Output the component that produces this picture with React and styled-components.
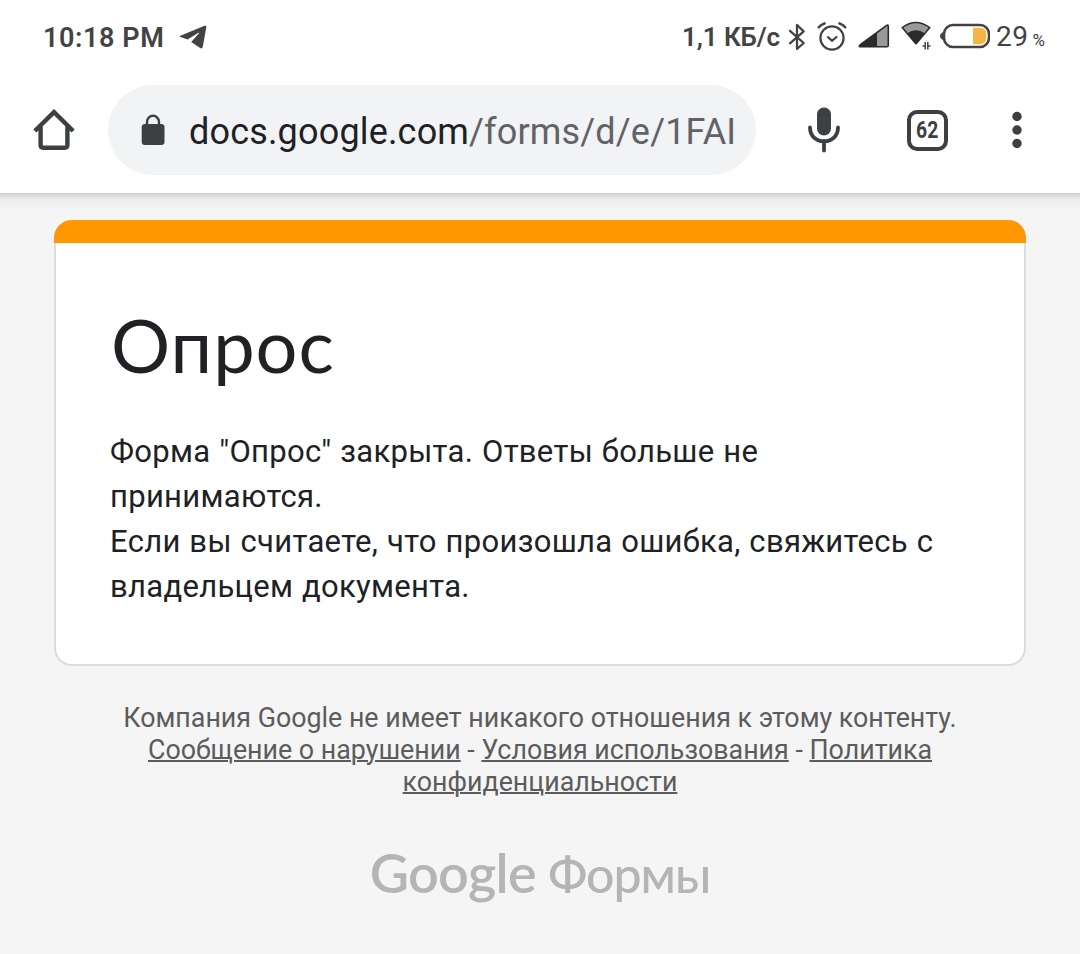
import React from "react";
import styled, { createGlobalStyle } from "styled-components";

const GlobalStyle = createGlobalStyle`
  * {
    box-sizing: border-box;
  }
  body {
    margin: 0;
    background: #f5f5f5;
    font-family: Roboto, "Noto Sans", sans-serif;
    color: #202124;
  }
`;

const Page = styled.div`
  width: 1080px;
  height: 954px;
  overflow: hidden;
  display: flex;
  flex-direction: column;
  background: #f5f5f5;
`;

const Header = styled.header`
  flex: none;
  height: 193px;
  background: #fff;
`;

const StatusBar = styled.div`
  height: 73px;
  padding: 0 25px 0 43px;
  display: flex;
  align-items: center;
  color: #434343;
  svg {
    flex: none;
    display: block;
  }
`;

const Time = styled.span`
  width: 136px;
  margin-top: 2px;
  font-size: 27px;
  font-weight: 600;
  letter-spacing: 0.6px;
  white-space: nowrap;
`;

const Indicators = styled.div`
  margin-left: auto;
  display: flex;
  align-items: center;
  gap: 11px;
`;

const Speed = styled.span`
  width: 95px;
  font-size: 26px;
  font-weight: 600;
  letter-spacing: -0.1px;
  white-space: nowrap;
`;

const Percent = styled.span`
  width: 59px;
  margin-left: -5px;
  display: flex;
  align-items: baseline;
  font-size: 28px;
  letter-spacing: 0.5px;
  small {
    margin-left: 4px;
    font-size: 17px;
  }
`;

const Toolbar = styled.div`
  height: 120px;
  padding: 12px 0 18px;
  display: flex;
  align-items: center;
  color: #3c4043;
`;

const ToolButton = styled.button`
  width: ${(props) => props.$width}px;
  height: 90px;
  padding: 0;
  border: 0;
  background: none;
  color: inherit;
  display: flex;
  align-items: center;
  justify-content: center;
`;

const AddressBar = styled.div`
  width: 648px;
  height: 90px;
  padding-left: 33px;
  border-radius: 45px;
  background: #f1f3f4;
  display: flex;
  align-items: center;
  overflow: hidden;
`;

const Url = styled.span`
  margin: 4px 0 0 24px;
  font-size: 36px;
  letter-spacing: 0.17px;
  white-space: nowrap;
  color: #202124;
  span {
    color: #5f6368;
  }
`;

const Tabs = styled.span`
  width: 41px;
  height: 41px;
  border: 4px solid #3c4043;
  border-radius: 10px;
  display: flex;
  align-items: center;
  justify-content: center;
  font-family: Roboto, sans-serif;
  font-size: 23px;
  font-weight: 700;
  span {
    transform: scaleX(0.84);
  }
`;

const Main = styled.main`
  flex: 1;
  padding: 27px 54px 0;
  background: linear-gradient(#cfcfcf, #dedede 3px, #ececec 6px, #f5f5f5 17px);
`;

const Card = styled.section`
  height: 446px;
  border: 2px solid #dadce0;
  border-top: 0;
  border-radius: 18px;
  background: #fff;
`;

const Stripe = styled.div`
  height: 23px;
  margin: 0 -2px;
  border-radius: 18px 18px 0 0;
  background: #ff9800;
`;

const Title = styled.h1`
  margin: 57px 0 0 55px;
  font-family: Lato, Inter, sans-serif;
  font-size: 74px;
  line-height: 90px;
  font-weight: 400;
  letter-spacing: 1px;
  color: #202124;
`;

const Message = styled.p`
  margin: 39px 0 0 54px;
  font-size: 31px;
  line-height: 45px;
  letter-spacing: 0.3px;
  word-spacing: 0.8px;
  white-space: nowrap;
`;

const Disclaimer = styled.p`
  margin: 36px 0 0;
  text-align: center;
  font-size: 26.8px;
  line-height: 32px;
  color: #5c5c5c;
  white-space: nowrap;
  a {
    color: inherit;
    text-decoration: underline;
    text-decoration-thickness: 2px;
  }
`;

const Brand = styled.div`
  margin-top: 42px;
  display: flex;
  justify-content: center;
  gap: 12px;
  font-family: Lato, Inter, sans-serif;
  line-height: 66px;
  color: #b5b5b5;
  align-items: baseline;
`;

const BrandName = styled.span`
  font-size: 54px;
  font-weight: 600;
  letter-spacing: -0.7px;
`;

const Product = styled.span`
  font-size: 50px;
  font-weight: 500;
  letter-spacing: -1px;
`;

const TelegramIcon = () => (
  <svg width="28" height="26" viewBox="0 0 28 26">
    <path
      d="M1.3 11.7 25.6 1.8Q27.5 1.2 27.3 3.2L23.8 22.7Q23.2 25.2 21.2 24L12.2 17.9 19.8 9.6Q20.6 8.2 19 8.9L8.6 15.4 1.5 13Q-.4 12.4 1.3 11.7Z"
      fill="currentColor"
    />
  </svg>
);

const BluetoothIcon = () => (
  <svg width="18" height="28" viewBox="0 0 18 28">
    <path
      d="M2 7.8 15.7 20 9 26V2L15.7 8.3 2 20.3"
      fill="none"
      stroke="currentColor"
      strokeWidth="2.3"
      strokeLinecap="round"
      strokeLinejoin="round"
    />
  </svg>
);

const AlarmIcon = () => (
  <svg width="30" height="30" viewBox="0 0 30 30">
    <g fill="none" stroke="currentColor" strokeWidth="2.2" strokeLinecap="round">
      <circle cx="15" cy="16" r="11.6" />
      <path d="m11 15.2 4.2 3.6 4.3-3.8" strokeLinejoin="round" />
      <path d="M1.8 5.2Q4 2.5 7.5 1.4M28.2 5.2Q26 2.5 22.5 1.4" strokeWidth="2.6" />
    </g>
  </svg>
);

const SignalIcon = () => (
  <svg width="32" height="28" viewBox="0 0 32 28">
    <path d="M18 10 29 2.5Q30.5 2 30.5 3.5V22.5Q30.5 24 29 24H18Z" fill="#999" />
    <path d="M2 22.5 19 9.8V24H2Z" fill="#2b2b2b" />
    <path
      d="M2 22 28.6 2.4Q30.3 1.5 30.3 3.5V22.5Q30.3 23.8 29 23.8H2Q.5 23.6 2 22Z"
      fill="none"
      stroke="#2b2b2b"
      strokeWidth="1.6"
    />
  </svg>
);

const WifiIcon = () => (
  <svg width="30" height="32" viewBox="0 0 30 32">
    <path
      d="M1.2 6.5Q14.5-3.5 28.8 6.5L15.6 22.3Q15 23 14.4 22.3Z"
      fill="#999"
      stroke="#2b2b2b"
      strokeWidth="1.5"
      strokeLinejoin="round"
    />
    <path d="M6 12.6Q15 6 24 12.6L15.6 22.3Q15 23 14.4 22.3Z" fill="#2b2b2b" />
    <path
      d="M24.2 21V28.5M24.2 25H21.5M26.8 28.5V21M26.8 25H29.5"
      fill="none"
      stroke="#434343"
      strokeWidth="1.5"
    />
  </svg>
);

const BatterySvg = styled.svg`
  margin: -2px 0 0 -2px;
`;

const BatteryIcon = () => (
  <BatterySvg width="50" height="26" viewBox="0 0 50 26">
    <path d="M4.5 8.5Q0 10 0 13T4.5 17.5Z" fill="#434343" />
    <rect x="4" y="2" width="45" height="22" rx="9" fill="#fff" stroke="#434343" strokeWidth="2.6" />
    <path d="M33 4.8H40Q46.2 4.8 46.2 11V15Q46.2 21.2 40 21.2H33Z" fill="#f5b544" />
  </BatterySvg>
);

const HomeIcon = () => (
  <svg width="42" height="42" viewBox="0 0 42 42">
    <path
      d="M1.8 22 21 3.2 40.2 22M7.6 17.5V36Q7.6 38.7 10.3 38.7H31.7Q34.4 38.7 34.4 36V17.5"
      fill="none"
      stroke="currentColor"
      strokeWidth="4.4"
    />
  </svg>
);

const LockIcon = () => (
  <svg width="24" height="32" viewBox="0 0 24 32">
    <path d="M6 12V7.8a6 6 0 0 1 12 0V12" fill="none" stroke="currentColor" strokeWidth="2.4" />
    <rect x=".7" y="10" width="22.8" height="21" rx="3.2" fill="currentColor" />
  </svg>
);

const MicIcon = () => (
  <svg width="34" height="46" viewBox="0 0 34 46">
    <rect x="10" y=".5" width="14" height="28" rx="7" fill="currentColor" />
    <path
      d="M3 20.5C3 29 9 34.2 17 34.2S31 29 31 20.5M17 34V43.5"
      fill="none"
      stroke="currentColor"
      strokeWidth="3.8"
      strokeLinecap="round"
    />
  </svg>
);

const MoreIcon = () => (
  <svg width="10" height="38" viewBox="0 0 10 38">
    <circle cx="5" cy="5.5" r="4.7" fill="currentColor" />
    <circle cx="5" cy="19" r="4.7" fill="currentColor" />
    <circle cx="5" cy="32.5" r="4.7" fill="currentColor" />
  </svg>
);

const App = () => (
  <Page>
    <GlobalStyle />
    <Header>
      <StatusBar>
        <Time>10:18 PM</Time>
        <TelegramIcon />
        <Indicators>
          <Speed>1,1 КБ/с</Speed>
          <BluetoothIcon />
          <AlarmIcon />
          <SignalIcon />
          <WifiIcon />
          <BatteryIcon />
          <Percent>
            29<small>%</small>
          </Percent>
        </Indicators>
      </StatusBar>
      <Toolbar>
        <ToolButton $width={108}>
          <HomeIcon />
        </ToolButton>
        <AddressBar>
          <LockIcon />
          <Url>
            docs.google.com<span>/forms/d/e/1FAI</span>
          </Url>
        </AddressBar>
        <ToolButton $width={136}>
          <MicIcon />
        </ToolButton>
        <ToolButton $width={70}>
          <Tabs>
            <span>62</span>
          </Tabs>
        </ToolButton>
        <ToolButton $width={110}>
          <MoreIcon />
        </ToolButton>
      </Toolbar>
    </Header>
    <Main>
      <Card>
        <Stripe />
        <Title>Опрос</Title>
        <Message>
          Форма "Опрос" закрыта. Ответы больше не
          <br />
          принимаются.
          <br />
          Если вы считаете, что произошла ошибка, свяжитесь с
          <br />
          владельцем документа.
        </Message>
      </Card>
      <Disclaimer>
        Компания Google не имеет никакого отношения к этому контенту.
        <br />
        <a>Сообщение о нарушении</a> - <a>Условия использования</a> - <a>Политика</a>
        <br />
        <a>конфиденциальности</a>
      </Disclaimer>
      <Brand>
        <BrandName>Google</BrandName>
        <Product>Формы</Product>
      </Brand>
    </Main>
  </Page>
);

export default App;
